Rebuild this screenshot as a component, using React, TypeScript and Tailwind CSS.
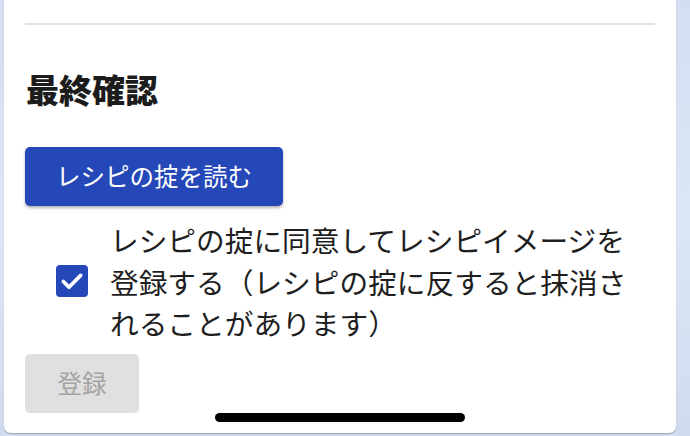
import React from "react";

const CheckIcon = () => (
  <svg viewBox="0 0 24 24" className="w-[26px] h-[26px]" fill="none">
    <path
      d="M4 12.5l5.2 5.2L20 6.8"
      stroke="white"
      strokeWidth="3.4"
      strokeLinecap="round"
      strokeLinejoin="round"
    />
  </svg>
);

export default function App() {
  const [agreed, setAgreed] = React.useState(true);

  return (
    <div
      className="relative w-[690px] h-[436px] overflow-hidden bg-gradient-to-b from-[#d3def2] via-[#dde6f5] to-[#d0dbef] pl-[4px] pr-[14px]"
      style={{ fontFamily: '"Noto Sans CJK JP", "Noto Sans", sans-serif' }}
    >
      <div className="bg-white rounded-b-[7px] shadow-[0_1px_1px_rgba(0,0,0,0.25)] px-[21px] pt-[23px] pb-[20px] flex flex-col items-start">
        <div className="w-full h-[2px] bg-[#e2e2e2]" />

        <h2 className="mt-[44px] ml-[1px] text-[33px] leading-[40px] font-black text-[#1c1c1c]">
          最終確認
        </h2>

        <button className="mt-[38px] w-[258px] h-[59px] rounded-[5px] bg-[#2548b9] text-white text-[24.5px] shadow-[0_2px_3px_rgba(0,0,0,0.3)] flex items-center justify-center">
          レシピの掟を読む
        </button>

        <label className="mt-[13px] flex items-center cursor-pointer">
          <button
            onClick={() => setAgreed(!agreed)}
            className={
              agreed
                ? "ml-[31px] w-[32px] h-[32px] rounded-[4px] bg-[#2548b9] flex items-center justify-center"
                : "ml-[31px] w-[32px] h-[32px] rounded-[4px] border-2 border-[#777] bg-white"
            }
          >
            {agreed && <CheckIcon />}
          </button>
          <span className="ml-[22px] w-[530px] text-[28.7px] leading-[41.5px] text-[#1e1e1e]">
            レシピの掟に同意してレシピイメージを登録する（レシピの掟に反すると抹消されることがあります）
          </span>
        </label>

        <button
          disabled={!agreed}
          className="mt-[10px] w-[114px] h-[59px] rounded-[5px] bg-[#e0e0e0] text-[#a3a3a3] text-[24.5px] flex items-center justify-center"
        >
          登録
        </button>
      </div>

      <div className="absolute left-[215px] top-[413px] w-[250px] h-[9px] rounded-full bg-black" />
    </div>
  );
}
